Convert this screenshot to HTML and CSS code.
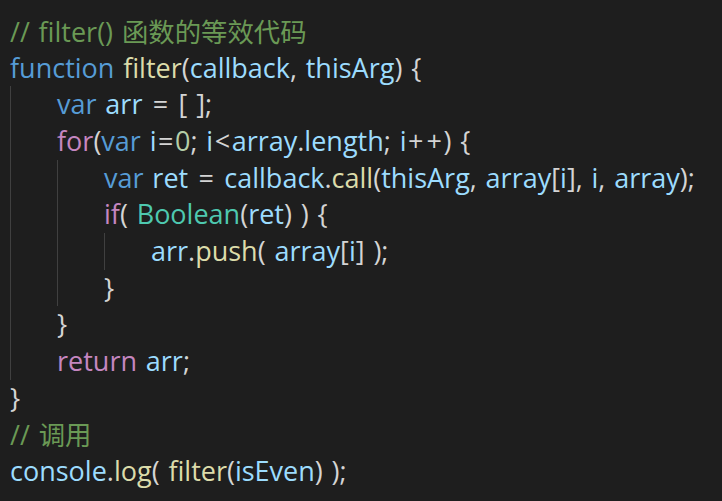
FILE: index.html
```html
<!DOCTYPE html>
<html lang="zh-CN">
<head>
<meta charset="utf-8">
<title>filter</title>
<link rel="stylesheet" href="styles.css">
</head>
<body>
<div class="editor">
  <div class="line"><span class="cm">// filter() <span class="cjk">函数的等效代码</span></span></div>
  <div class="line"><span class="kw">function</span> <span class="fn">filter</span><span class="p">(</span><span class="v">callback</span><span class="p">, </span><span class="v">thisArg</span><span class="p">) {</span></div>
  <div class="block">
    <div class="line"><span class="kw">var</span> <span class="v">arr</span> <span class="p"><span class="op">=</span> [ ];</span></div>
    <div class="line"><span class="ctl">for</span><span class="p">(</span><span class="kw">var</span> <span class="v">i</span><span class="p op">=</span><span class="num">0</span><span class="p">; </span><span class="v">i</span><span class="p op">&lt;</span><span class="v">array</span><span class="p">.</span><span class="v">length</span><span class="p">; </span><span class="v">i</span><span class="p"><span class="op">+</span><span class="op">+</span>) {</span></div>
    <div class="block">
      <div class="line"><span class="kw">var</span> <span class="v">ret</span> <span class="p"><span class="op">=</span> </span><span class="v">callback</span><span class="p">.</span><span class="fn">call</span><span class="p">(</span><span class="v">thisArg</span><span class="p">, </span><span class="v">array</span><span class="p">[</span><span class="v">i</span><span class="p">], </span><span class="v">i</span><span class="p">, </span><span class="v">array</span><span class="p">);</span></div>
      <div class="line"><span class="ctl">if</span><span class="p">( </span><span class="ty">Boolean</span><span class="p">(</span><span class="v">ret</span><span class="p">) ) {</span></div>
      <div class="block">
        <div class="line"><span class="v">arr</span><span class="p">.</span><span class="fn">push</span><span class="p">( </span><span class="v">array</span><span class="p">[</span><span class="v">i</span><span class="p">] );</span></div>
      </div>
      <div class="line"><span class="p">}</span></div>
    </div>
    <div class="line"><span class="p">}</span></div>
    <div class="line"><span class="ctl">return</span> <span class="v">arr</span><span class="p">;</span></div>
  </div>
  <div class="line"><span class="p">}</span></div>
  <div class="line"><span class="cm">// <span class="cjk">调用</span></span></div>
  <div class="line"><span class="v">console</span><span class="p">.</span><span class="fn">log</span><span class="p">( </span><span class="fn">filter</span><span class="p">(</span><span class="v">isEven</span><span class="p">) );</span></div>
</div>
</body>
</html>
```
FILE: styles.css
```css
html, body {
  margin: 0;
  padding: 0;
  background: #1e1e1e;
}
.editor {
  padding: 13px 0 0 10px;
  font-family: "Open Sans", "Noto Sans CJK SC", sans-serif;
  font-size: 27px;
  line-height: 36.67px;
  word-spacing: 1.8px;
  color: #d4d4d4;
}
.line {
  white-space: pre;
  height: 36.67px;
}
.block {
  border-left: 1px solid #404040;
  padding-left: 46px;
}
.cjk {
  font-family: "Noto Sans CJK SC", sans-serif;
  font-size: 26.4px;
}
.op {
  margin: 0 1.5px;
}
.cm { color: #6a9955; }
.kw { color: #569cd6; }
.fn { color: #dcdcaa; }
.v { color: #9cdcfe; }
.p { color: #d4d4d4; }
.ctl { color: #c586c0; }
.num { color: #b5cea8; }
.ty { color: #4ec9b0; }
```
